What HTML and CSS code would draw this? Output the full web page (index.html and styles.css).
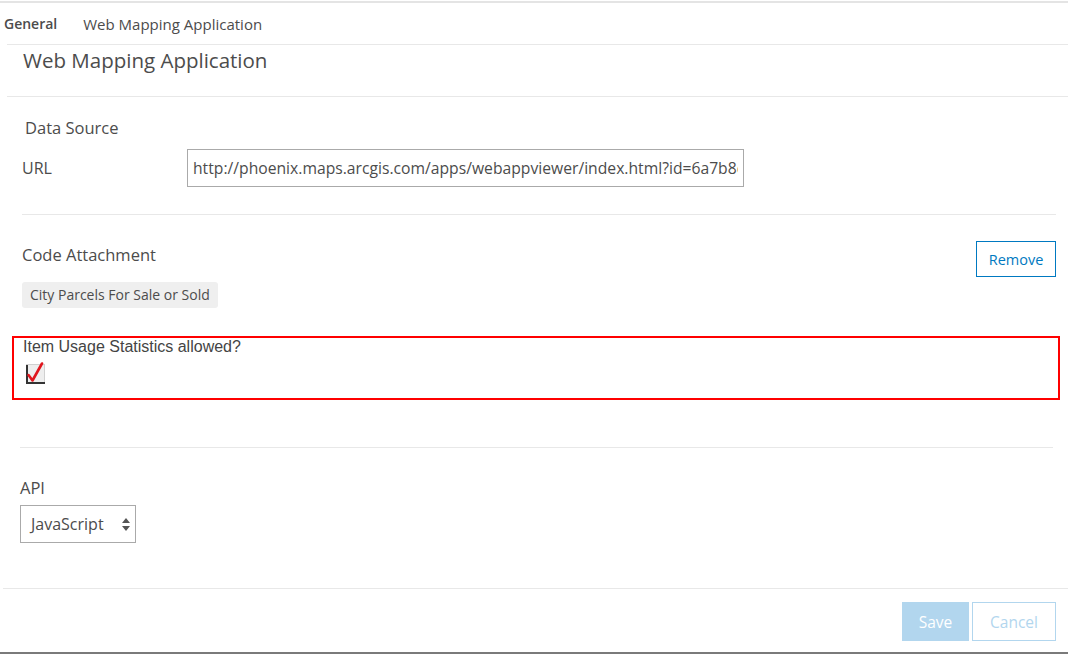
FILE: index.html
```html
<!DOCTYPE html>
<html lang="en">
<head>
    <meta charset="UTF-8">
    <title>Web Mapping Application - Settings</title>
    <link rel="stylesheet" href="styles.css">
</head>
<body>
    <div class="panel">
        <div class="tabs">
            <span class="tab active">General</span>
            <span class="tab">Web Mapping Application</span>
        </div>

        <div class="section title-section">
            <h1>Web Mapping Application</h1>
        </div>

        <div class="section source">
            <h2>Data Source</h2>
            <div class="field-row">
                <label class="field-label">URL</label>
                <input class="text-input" type="text" value="http://phoenix.maps.arcgis.com/apps/webappviewer/index.html?id=6a7b8c2d4e5f">
            </div>
        </div>

        <div class="section attachment">
            <div class="attach-head">
                <div>
                    <h2>Code Attachment</h2>
                    <span class="tag">City Parcels For Sale or Sold</span>
                </div>
                <button class="btn-outline">Remove</button>
            </div>
            <div class="usage">
                <div class="usage-label">Item Usage Statistics allowed?</div>
                <svg class="check" width="20" height="22" viewBox="0 0 20 22">
                    <rect x="0.5" y="2.5" width="18" height="19" fill="#eeeeee" stroke="#d0d0d0"/>
                    <path d="M1 3 V21 H19" fill="none" stroke="#333" stroke-width="2"/>
                    <path d="M2.5 13 L6.5 18.5 L16 1.5" fill="none" stroke="#e0161e" stroke-width="2.6" stroke-linecap="round" stroke-linejoin="round"/>
                </svg>
            </div>
        </div>

        <div class="section api">
            <h2>API</h2>
            <div class="select">
                <span>JavaScript</span>
                <svg width="8" height="13" viewBox="0 0 8 13">
                    <path d="M4 0 L8 5 H0 Z M4 13 L8 8 H0 Z" fill="#555"/>
                </svg>
            </div>
        </div>

        <div class="footer">
            <button class="btn-primary">Save</button>
            <button class="btn-cancel">Cancel</button>
        </div>
    </div>
</body>
</html>
```

FILE: styles.css
```css
body {
    margin: 0;
    font-family: 'Open Sans', 'Lato', sans-serif;
    color: #4c4c4c;
    background: #fff;
}
.panel {
    width: 1068px;
    height: 649px;
    border-top: 2px solid #e4e4e4;
    border-bottom: 2px solid #7a7a7a;
    margin-top: 1px;
}
.tabs {
    height: 41px;
    margin-left: 7px;
    border-bottom: 1px solid #e8e8e8;
    display: flex;
    align-items: center;
    gap: 26px;
    font-size: 15px;
}
.tabs .tab:first-child {
    margin-left: -3px;
    font-size: 14px;
}
.tab.active {
    font-weight: 600;
}
h1 {
    margin: 0;
    font-weight: normal;
    font-size: 20.5px;
    line-height: 28px;
    color: #4c4c4c;
}
h2 {
    margin: 0;
    font-weight: normal;
    font-size: 16.5px;
    line-height: 22px;
    color: #4c4c4c;
}
.section {
    border-bottom: 1px solid #e8e8e8;
}
.title-section {
    margin-left: 7px;
    height: 52px;
    padding: 1px 0 0 16px;
    box-sizing: border-box;
}
.source {
    margin: 0 12px 0 22px;
    height: 118px;
    padding-top: 20px;
    box-sizing: border-box;
}
.source h2 {
    margin-left: 3px;
}
.field-row {
    display: flex;
    align-items: center;
    margin-top: 10px;
}
.field-label {
    width: 165px;
    font-size: 16px;
}
.text-input {
    width: 557px;
    height: 38px;
    box-sizing: border-box;
    border: 1px solid #aaa;
    padding: 0 5px;
    font-family: inherit;
    font-size: 15.7px;
    color: #4c4c4c;
}
.attachment {
    margin: 0 15px 0 20px;
    height: 233px;
    padding-top: 29px;
    box-sizing: border-box;
}
.attach-head {
    display: flex;
    justify-content: space-between;
    align-items: flex-start;
    margin-left: 2px;
    margin-right: -3px;
}
.tag {
    display: block;
    width: fit-content;
    margin-top: 16px;
    background: #efefef;
    border-radius: 3px;
    padding: 3px 8px;
    font-size: 14px;
    line-height: 20px;
}
.btn-outline {
    margin-top: -3px;
    width: 80px;
    height: 36px;
    border: 1px solid #0079c1;
    background: #fff;
    color: #0079c1;
    font-family: inherit;
    font-size: 14.5px;
}
.usage {
    margin: 28px -7px 0 -8px;
    height: 64px;
    border: 2px solid #f00;
    box-sizing: border-box;
    padding: 0 0 0 9px;
    font-family: 'Liberation Sans', Arial, sans-serif;
}
.usage-label {
    font-size: 16px;
    color: #444;
    line-height: 17px;
}
.check {
    display: block;
    margin: 7px 0 0 3px;
}
.api {
    margin: 0 15px 0 20px;
    height: 140px;
    padding-top: 29px;
    box-sizing: border-box;
    border-bottom: none;
}
.select {
    margin-top: 6px;
    width: 116px;
    height: 38px;
    box-sizing: border-box;
    border: 1px solid #aaa;
    display: flex;
    align-items: center;
    justify-content: space-between;
    padding: 0 5px 0 10px;
    font-size: 16px;
}
.footer {
    margin-left: 3px;
    border-top: 1px solid #e8e8e8;
    display: flex;
    justify-content: flex-end;
    gap: 3px;
    padding: 13px 12px 0 0;
}
.footer button {
    height: 39px;
    font-family: inherit;
    font-size: 15.5px;
}
.btn-primary {
    width: 67px;
    background: #b2d6ee;
    border: 1px solid #b2d6ee;
    color: #fff;
}
.btn-cancel {
    width: 84px;
    background: #fff;
    border: 1px solid #b2d6ee;
    color: #b2d6ee;
}
```
